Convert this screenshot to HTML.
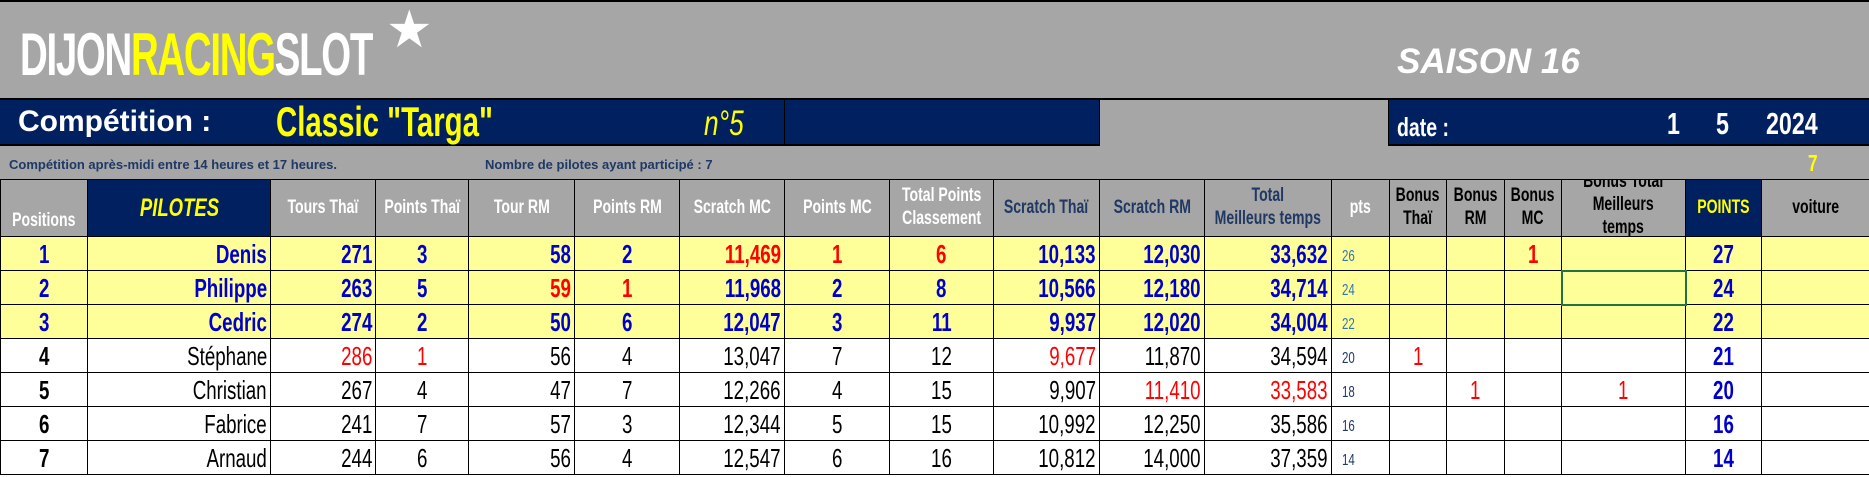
<!DOCTYPE html>
<html><head><meta charset="utf-8"><style>
*{margin:0;padding:0;box-sizing:border-box}
body{width:1869px;height:477px;overflow:hidden;background:#fff;position:relative;font-family:"Liberation Sans",sans-serif}
.abs{position:absolute;white-space:nowrap}
table{position:absolute;left:0;top:179px;border-collapse:collapse;table-layout:fixed;width:1869px}
td{border:1px solid #000;overflow:hidden;white-space:nowrap;font-size:26px;height:34px;padding:0 3px;line-height:1}
td span.s{display:inline-block;transform:scaleX(.72)}
td.r span.s{transform-origin:right center}
td.c span.s,tr.h td span.s{transform-origin:center center}
td.pts span.s{transform-origin:left center}
tr.h td{height:56px;background:#a6a6a6;color:#fff;font-weight:bold;font-size:19px;text-align:center;line-height:1.2;padding:0}
tr.h td .hb{height:56px;overflow:hidden;display:flex;align-items:center;justify-content:center}
tr.h td span.s{transform:scaleX(.74)}
tr.y td{background:#ffff99;color:#0000cc;font-weight:bold}
.r{text-align:right}.c{text-align:center}.l{text-align:left}
.red{color:#ff0000!important}
.pts{font-size:16px!important;font-weight:normal!important;vertical-align:bottom;padding-bottom:5px!important;padding-left:10px!important}
tr.y .pts{color:#2e75b6}
tr.w .pts{color:#1f3864}
tr.w td:first-child{font-weight:bold}
.bp{color:#0000cc!important;font-weight:bold}
</style></head><body>
<div class="abs" style="left:0;top:0;width:1869px;height:100px;background:#a6a6a6;border-top:2px solid #000;border-bottom:2px solid #000"></div>
<div class="abs" style="left:20px;top:20px;font-size:60px;font-weight:bold;color:#fff;letter-spacing:-2px;transform:scaleX(.64);transform-origin:left top">DIJON<span style="color:#ffff00">RACING</span>SLOT</div>
<div class="abs" style="left:386px;top:0px;font-size:52px;color:#fff">★</div>
<div class="abs" style="left:1397px;top:42px;font-size:35px;font-weight:bold;font-style:italic;color:#fff">SAISON 16</div>
<div class="abs" style="left:0;top:100px;width:1869px;height:46px;background:#002060;border-bottom:2px solid #000"></div>
<div class="abs" style="left:784px;top:100px;width:1px;height:46px;background:#000"></div>
<div class="abs" style="left:1099px;top:100px;width:290px;height:46px;background:#a6a6a6;border-left:1px solid #000;border-right:1px solid #000"></div>
<div class="abs" style="left:18px;top:105px;font-size:30px;font-weight:bold;color:#fff">Compétition :</div>
<div class="abs" style="left:276px;top:98px;font-size:42px;font-weight:bold;color:#ffff00;transform:scaleX(.7);transform-origin:left top">Classic "Targa"</div>
<div class="abs" style="left:704px;top:104px;font-size:35px;font-style:italic;color:#ffff00;transform:scaleX(.75);transform-origin:left top">n°5</div>
<div class="abs" style="left:1397px;top:112px;font-size:26px;font-weight:bold;color:#fff;transform:scaleX(.75);transform-origin:left top">date :</div>
<div class="abs" style="left:1667px;top:106px;font-size:31px;font-weight:bold;color:#fff;transform:scaleX(.75);transform-origin:left top">1</div>
<div class="abs" style="left:1716px;top:106px;font-size:31px;font-weight:bold;color:#fff;transform:scaleX(.75);transform-origin:left top">5</div>
<div class="abs" style="left:1766px;top:106px;font-size:31px;font-weight:bold;color:#fff;transform:scaleX(.75);transform-origin:left top">2024</div>
<div class="abs" style="left:0;top:146px;width:1869px;height:33px;background:#a6a6a6"></div>
<div class="abs" style="left:9px;top:157px;font-size:13px;font-weight:bold;color:#1f3864">Compétition après-midi entre 14 heures et 17 heures.</div>
<div class="abs" style="left:485px;top:157px;font-size:13px;font-weight:bold;color:#1f3864">Nombre de pilotes ayant participé : 7</div>
<div class="abs" style="left:1808px;top:150px;font-size:23px;font-weight:bold;color:#ffff00;transform:scaleX(.75);transform-origin:left top">7</div>
<table>
<colgroup><col style="width:87px"><col style="width:183px"><col style="width:105px"><col style="width:93px"><col style="width:106px"><col style="width:105px"><col style="width:105px"><col style="width:105px"><col style="width:104px"><col style="width:106px"><col style="width:105px"><col style="width:127px"><col style="width:58px"><col style="width:57px"><col style="width:58px"><col style="width:57px"><col style="width:124px"><col style="width:76px"><col style="width:108px"></colgroup>
<tr class="h">
<td data-b="1">Positions</td>
<td style="background:#002060;color:#ffff00;font-style:italic;font-size:25px">PILOTES</td>
<td>Tours Thaï</td><td>Points Thaï</td><td>Tour RM</td><td>Points RM</td><td>Scratch MC</td><td>Points MC</td>
<td>Total Points<br>Classement</td>
<td style="color:#1f3864">Scratch Thaï</td><td style="color:#1f3864">Scratch RM</td><td style="color:#1f3864">Total<br>Meilleurs temps</td>
<td>pts</td>
<td style="color:#000">Bonus<br>Thaï</td><td style="color:#000">Bonus<br>RM</td><td style="color:#000">Bonus<br>MC</td>
<td style="color:#000" data-t="1">Bonus Total<br>Meilleurs<br>temps</td>
<td style="background:#002060;color:#ffff00">POINTS</td>
<td style="color:#000">voiture</td>
</tr>
<tr class="y"><td class="c">1</td><td class="r">Denis</td><td class="r">271</td><td class="c">3</td><td class="r">58</td><td class="c">2</td><td class="r red">11,469</td><td class="c red">1</td><td class="c red">6</td><td class="r">10,133</td><td class="r">12,030</td><td class="r">33,632</td><td class="pts">26</td><td></td><td></td><td class="c red">1</td><td></td><td class="c">27</td><td></td></tr>
<tr class="y"><td class="c">2</td><td class="r">Philippe</td><td class="r">263</td><td class="c">5</td><td class="r red">59</td><td class="c red">1</td><td class="r">11,968</td><td class="c">2</td><td class="c">8</td><td class="r">10,566</td><td class="r">12,180</td><td class="r">34,714</td><td class="pts">24</td><td></td><td></td><td></td><td style="border:2px solid #217346"></td><td class="c">24</td><td></td></tr>
<tr class="y"><td class="c">3</td><td class="r">Cedric</td><td class="r">274</td><td class="c">2</td><td class="r">50</td><td class="c">6</td><td class="r">12,047</td><td class="c">3</td><td class="c">11</td><td class="r">9,937</td><td class="r">12,020</td><td class="r">34,004</td><td class="pts">22</td><td></td><td></td><td></td><td></td><td class="c">22</td><td></td></tr>
<tr class="w"><td class="c">4</td><td class="r">Stéphane</td><td class="r red">286</td><td class="c red">1</td><td class="r">56</td><td class="c">4</td><td class="r">13,047</td><td class="c">7</td><td class="c">12</td><td class="r red">9,677</td><td class="r">11,870</td><td class="r">34,594</td><td class="pts">20</td><td class="c red">1</td><td></td><td></td><td></td><td class="c bp">21</td><td></td></tr>
<tr class="w"><td class="c">5</td><td class="r">Christian</td><td class="r">267</td><td class="c">4</td><td class="r">47</td><td class="c">7</td><td class="r">12,266</td><td class="c">4</td><td class="c">15</td><td class="r">9,907</td><td class="r red">11,410</td><td class="r red">33,583</td><td class="pts">18</td><td></td><td class="c red">1</td><td></td><td class="c red">1</td><td class="c bp">20</td><td></td></tr>
<tr class="w"><td class="c">6</td><td class="r">Fabrice</td><td class="r">241</td><td class="c">7</td><td class="r">57</td><td class="c">3</td><td class="r">12,344</td><td class="c">5</td><td class="c">15</td><td class="r">10,992</td><td class="r">12,250</td><td class="r">35,586</td><td class="pts">16</td><td></td><td></td><td></td><td></td><td class="c bp">16</td><td></td></tr>
<tr class="w"><td class="c">7</td><td class="r">Arnaud</td><td class="r">244</td><td class="c">6</td><td class="r">56</td><td class="c">4</td><td class="r">12,547</td><td class="c">6</td><td class="c">16</td><td class="r">10,812</td><td class="r">14,000</td><td class="r">37,359</td><td class="pts">14</td><td></td><td></td><td></td><td></td><td class="c bp">14</td><td></td></tr>
</table>
<script>
document.querySelectorAll('td').forEach(function(td){
  if(!td.innerHTML.trim())return;
  var inner='<span class="s">'+td.innerHTML+'</span>';
  if(td.parentNode.className=='h'){
    var st='';
    if(td.getAttribute('data-b'))st='align-items:flex-end;padding-bottom:3px;';
    if(td.getAttribute('data-t'))st='align-items:flex-start;';
    inner='<div class="hb" style="'+st+'">'+(td.getAttribute('data-t')?'<div style="margin-top:-9px">'+inner+'</div>':inner)+'</div>';
  }
  td.innerHTML=inner;
});
</script>
</body></html>
